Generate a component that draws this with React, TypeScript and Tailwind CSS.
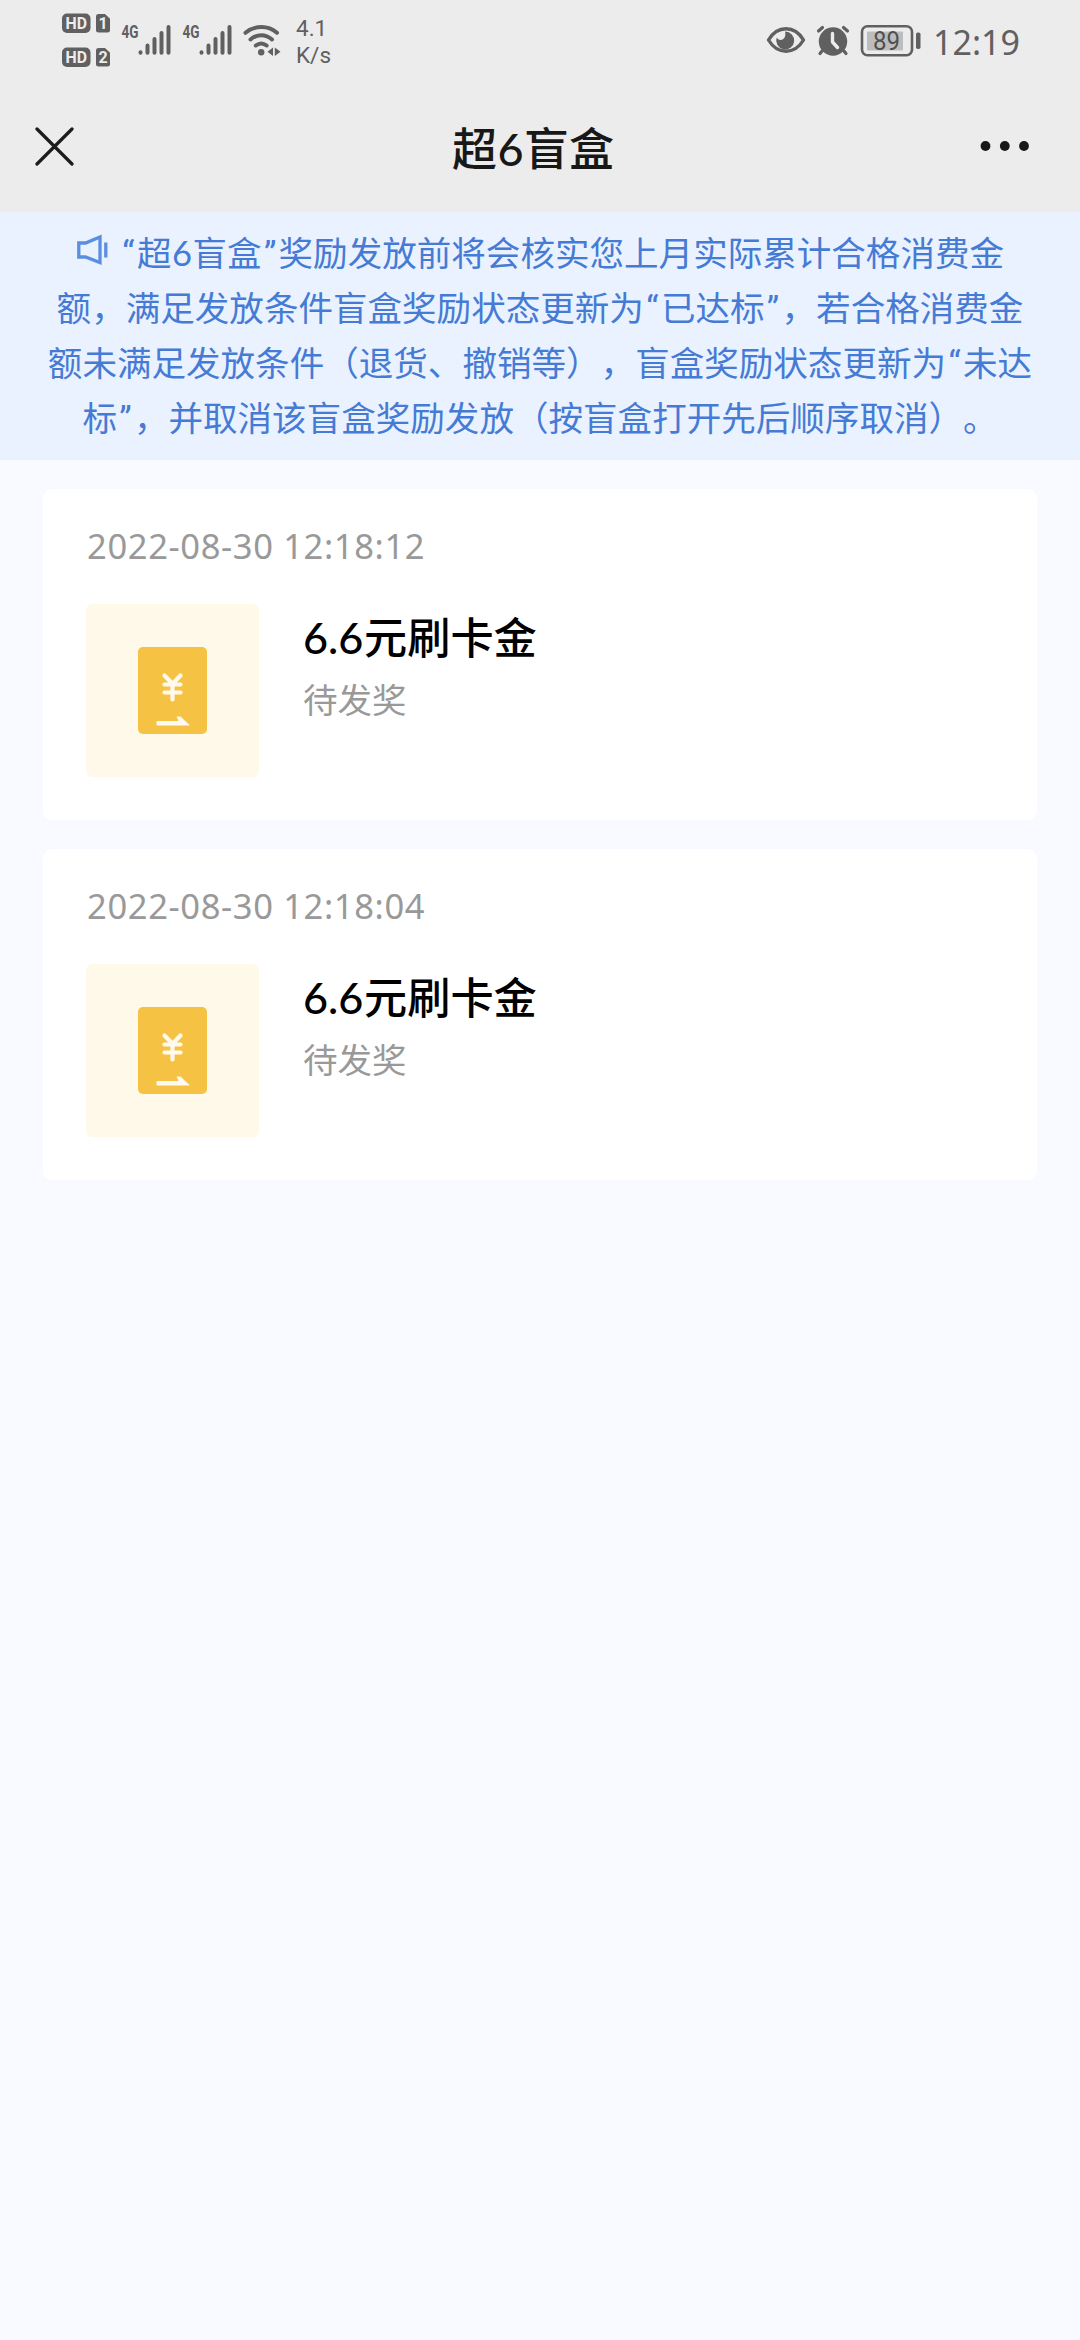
import type { ReactNode } from "react";

const INK = "#606060";

function HdBadge({ sim }: { sim: string }) {
  return (
    <svg className="block h-[20px] w-[50px]" viewBox="0 0 50 20">
      <rect x="0" y="0.5" width="28.5" height="19.5" rx="5" fill={INK} />
      <text x="14.2" y="16" textAnchor="middle" fontSize="17" fontWeight="700" fill="#ececec" fontFamily="Roboto, sans-serif" textLength="21.5" lengthAdjust="spacingAndGlyphs">HD</text>
      <path d="M36.5 1h6.500l5 4.800V17a2.500 2.500 0 0 1-2.500 2.500h-9A2.500 2.500 0 0 1 34 17V3.500A2.500 2.500 0 0 1 36.500 1z" fill={INK} />
      <text x="41" y="16" textAnchor="middle" fontSize="16" fontWeight="700" fill="#ececec" fontFamily="Roboto, sans-serif">{sim}</text>
    </svg>
  );
}

function Signal() {
  return (
    <svg className="block h-[40px] w-[51px]" viewBox="0 -6 51 40">
      <text x="0.5" y="13.800" fontSize="18" fontWeight="700" fill={INK} fontFamily="Roboto, sans-serif" textLength="17" lengthAdjust="spacingAndGlyphs">4G</text>
      <g stroke={INK} strokeWidth="4" strokeLinecap="round">
        <path d="M19.500 28.300v.4M26.500 21.500v7.200M33.500 15v13.700M40.500 9v19.700M47.500 3v25.700" />
      </g>
    </svg>
  );
}

function Wifi() {
  return (
    <svg className="mt-[6px] block h-[34px] w-[38px]" viewBox="0 0 38 34">
      <g fill="none" stroke={INK} strokeWidth="4" strokeLinecap="round">
        <path d="M2.500 8.800C12 1 25 1 34 8.800" />
        <path d="M7.500 15.500C14 9.900 22.500 9.900 29 15.500" />
        <path d="M12.800 21.500c3.300-2.500 7.500-2.500 10.800 0" />
      </g>
      <circle cx="18.200" cy="28.300" r="3.200" fill={INK} />
      <path d="M30 23.500v8.500l-5.500-4.300zM31.800 23.500v8.500l5.700-4.300z" fill={INK} />
    </svg>
  );
}

function Eye() {
  return (
    <svg className="block h-[28px] w-[40px]" viewBox="0 0 40 28">
      <path d="M2.500 14C7 6.500 13 2.800 20 2.800S33 6.500 37.500 14C33 21.500 27 25.200 20 25.200S7 21.500 2.500 14z" fill="none" stroke={INK} strokeWidth="3.400" strokeLinejoin="round" />
      <path d="M19 5.500a9 9 0 1 1-8.300 6c1.200 2.500 4.300 3.300 6.600 1.500 2.200-1.900 2.500-5 1.700-7.500z" fill={INK} />
    </svg>
  );
}

function Alarm() {
  return (
    <svg className="block h-[32px] w-[34px]" viewBox="0 0 34 32">
      <g stroke={INK} strokeWidth="3.200" strokeLinecap="round">
        <path d="M2.500 6L6.500 2.500M31.500 6L27.500 2.500M6 26l-2 2.500M28 26l2 2.500" />
      </g>
      <circle cx="17" cy="16.500" r="14.200" fill={INK} />
      <path d="M16.500 8.500v8.500l5 5.500" fill="none" stroke="#ececec" strokeWidth="3.400" strokeLinecap="round" strokeLinejoin="round" />
    </svg>
  );
}

function Battery() {
  return (
    <svg className="block h-[32px] w-[61px]" viewBox="0 0 61 32">
      <rect x="2" y="1.300" width="50" height="29" rx="5.500" fill="none" stroke={INK} strokeWidth="2.600" />
      <rect x="7" y="6.500" width="36" height="19" rx="1" fill="#bdbdbd" />
      <text x="26.500" y="24.700" textAnchor="middle" fontSize="25" fill="#505050" fontFamily="Roboto, sans-serif" textLength="27" lengthAdjust="spacingAndGlyphs">89</text>
      <rect x="56" y="7.500" width="4.500" height="16.500" rx="1.800" fill={INK} />
    </svg>
  );
}

function Speaker() {
  return (
    <svg className="block h-[32px] w-[32px]" viewBox="0 0 32 32" fill="none" stroke="#5c8ee0" strokeWidth="3.300">
      <path d="M2.800 9h6.700L24 3v25.500L9.500 23H2.800z" />
      <path d="M29.800 8.500v15" />
    </svg>
  );
}

function Coupon() {
  return (
    <div className="flex h-[173px] w-[173px] items-center justify-center rounded-md bg-[#fef9e9]">
      <svg className="block h-[87px] w-[69px]" viewBox="0 0 69 87">
        <rect width="69" height="87" rx="5" fill="#f6c244" />
        <g fill="none" stroke="#fffaf0" strokeWidth="4.200" strokeLinecap="round">
          <path d="M26.500 28.500l8 8.300 8-8.300M26.500 37.500h16M26.500 45.500h16M34.500 37v15.500" />
        </g>
        <path d="M19.500 74h21l-2-4.500h4L52 78.500H19.500a1 1 0 0 1-1-1V75a1 1 0 0 1 1-1z" fill="#fffaf0" />
      </svg>
    </div>
  );
}

function Quote({ children }: { children: ReactNode }) {
  return <span className="inline-block w-[17px] text-center font-[Roboto] leading-none">{children}</span>;
}

function Notice() {
  return (
    <section className="flex h-[248px] flex-col items-center bg-[#e9f2fe] pt-[13px] text-[34.56px] leading-[55px] whitespace-nowrap text-[#467bd5] [text-spacing-trim:space-all]">
      <div className="flex h-[55px]">
        <span className="mr-[12px] flex items-center pb-[6px]"><Speaker /></span>
        <p><Quote>“</Quote>超<span className="inline-block w-[21px] text-center font-[Lato] leading-none">6</span>盲盒<Quote>”</Quote>奖励发放前将会核实您上月实际累计合格消费金</p>
      </div>
      <p className="h-[55px]">额，满足发放条件盲盒奖励状态更新为<Quote>“</Quote>已达标<Quote>”</Quote>，若合格消费金</p>
      <p className="h-[55px]">额未满足发放条件（退货、撤销等），盲盒奖励状态更新为<Quote>“</Quote>未达</p>
      <p className="h-[55px]">标<Quote>”</Quote>，并取消该盲盒奖励发放（按盲盒打开先后顺序取消）。</p>
    </section>
  );
}

function RewardCard({ time }: { time: string }) {
  return (
    <article className="h-[331px] rounded-[9px] bg-white px-[43px] pt-[30px]">
      <time className="block h-[85px] pl-px text-[34.56px] leading-[54px] tracking-[0.62px] text-[#999999]">{time}</time>
      <div className="flex gap-[44px]">
        <Coupon />
        <div className="pt-[2px]">
          <h2 className="h-[64px] text-[43.2px] leading-[64px] font-medium text-black">
            <span className="inline-block w-[61px] font-[Lato] leading-none">6.6</span>元刷卡金
          </h2>
          <p className="pt-[1px] text-[34.56px] leading-[58px] text-[#999999]">待发奖</p>
        </div>
      </div>
    </article>
  );
}

export default function App() {
  return (
    <div className="h-[2340px] w-[1080px] overflow-hidden bg-[#f8faff] font-['Noto_Sans','Noto_Sans_CJK_SC',sans-serif]">
      <header className="h-[212px] bg-[#ececec]">
        <div className="flex h-[80px] items-start justify-between pl-[62px]">
          <div className="flex">
            <div className="flex flex-col gap-[14px] pt-[13px]">
              <HdBadge sim="1" />
              <HdBadge sim="2" />
            </div>
            <div className="ml-[9px] flex gap-[10px] pt-[18px]">
              <Signal />
              <Signal />
              <Wifi />
            </div>
            <div className="ml-[15px] pt-[15px] font-[Roboto] text-[22.5px] leading-[27px] text-[#606060]">
              <div>4.1</div>
              <div>K/s</div>
            </div>
          </div>
          <div className="flex w-[314px] pt-[25px]">
            <div className="pt-[1px]"><Eye /></div>
            <div className="ml-[10px]"><Alarm /></div>
            <div className="ml-[10px]"><Battery /></div>
            <div className="ml-[12px] text-[34px] leading-[34px] text-[#606060]">12:19</div>
          </div>
        </div>
        <div className="flex h-[132px] items-start pr-[50px] pl-[35px]">
          <svg className="mt-[47px] h-[39px] w-[39px]" viewBox="0 0 39 39" stroke="#1c1c1c" strokeWidth="3.200" strokeLinecap="round">
            <path d="M2 2l35 35M37 2L2 37" />
          </svg>
          <h1 className="mt-[37px] ml-[378px] text-[45px] leading-[64px] font-medium text-[#181818]">
            超<span className="inline-block w-[27px] text-center font-[Lato] leading-none">6</span>盲盒
          </h1>
          <svg className="mt-[60px] ml-auto h-[12px] w-[50px]" viewBox="0 0 50 12" fill="#181818">
            <circle cx="5.500" cy="6" r="4.900" />
            <circle cx="24.800" cy="6" r="4.900" />
            <circle cx="44" cy="6" r="4.900" />
          </svg>
        </div>
      </header>
      <Notice />
      <main className="flex flex-col gap-[29px] px-[43px] pt-[29px]">
        <RewardCard time="2022-08-30 12:18:12" />
        <RewardCard time="2022-08-30 12:18:04" />
      </main>
    </div>
  );
}
